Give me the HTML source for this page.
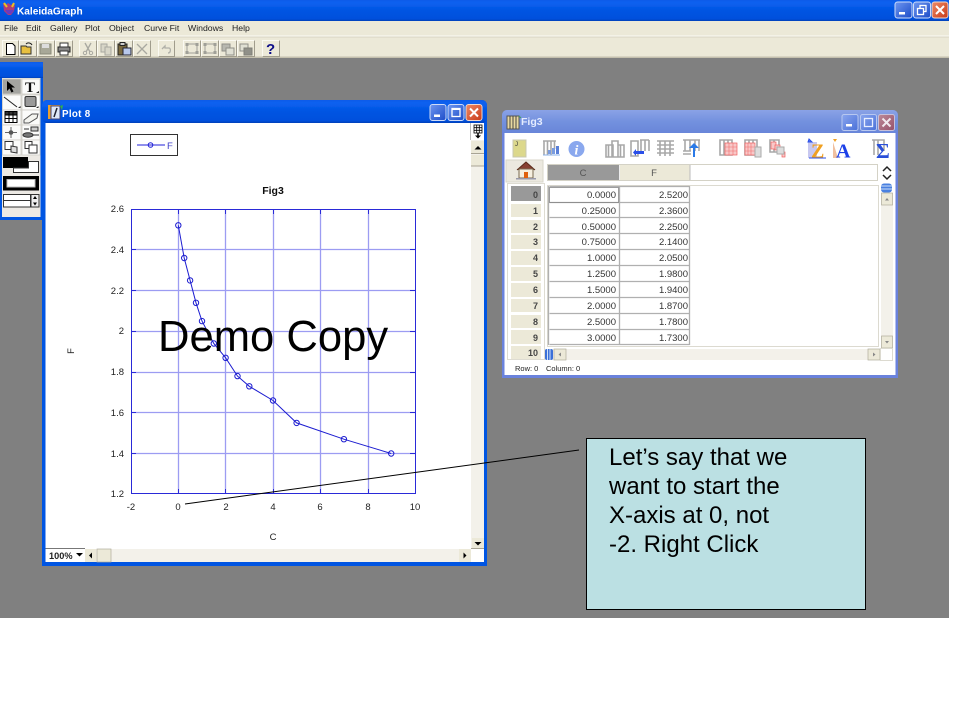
<!DOCTYPE html>
<html><head><meta charset="utf-8"><title>KaleidaGraph</title>
<style>
html,body{margin:0;padding:0;background:#fff;width:960px;height:720px;overflow:hidden}
svg{display:block;position:absolute;left:0;top:0}
text{font-family:"Liberation Sans",sans-serif}
.m{font-size:8.7px;fill:#222}
.d{font-size:9.5px;fill:#333;text-anchor:end}
.r{font-size:9px;font-weight:bold;fill:#444;text-anchor:end}
.c{font-size:24px;fill:#000}
</style></head><body>
<svg width="960" height="720" viewBox="0 0 960 720" xmlns="http://www.w3.org/2000/svg">
<defs>
<filter id="s" filterUnits="userSpaceOnUse" x="0" y="0" width="960" height="720"><feGaussianBlur stdDeviation=".32"/></filter>
<linearGradient id="tb" x1="0" y1="0" x2="0" y2="1"><stop offset="0" stop-color="#0a5ae8"/><stop offset=".12" stop-color="#0a62f0"/><stop offset=".5" stop-color="#0354e2"/><stop offset=".9" stop-color="#0250dc"/><stop offset="1" stop-color="#0140b8"/></linearGradient>
<linearGradient id="tl" x1="0" y1="0" x2="0" y2="1"><stop offset="0" stop-color="#8aa2e6"/><stop offset=".5" stop-color="#7290de"/><stop offset="1" stop-color="#6884d8"/></linearGradient>
<linearGradient id="bb" x1="0" y1="0" x2="1" y2="1"><stop offset="0" stop-color="#6e96f0"/><stop offset="1" stop-color="#1c4cc8"/></linearGradient>
<linearGradient id="br" x1="0" y1="0" x2="1" y2="1"><stop offset="0" stop-color="#ee8a66"/><stop offset="1" stop-color="#c83a18"/></linearGradient>
<linearGradient id="bl" x1="0" y1="0" x2="1" y2="1"><stop offset="0" stop-color="#8aa6ee"/><stop offset="1" stop-color="#4a70d8"/></linearGradient>
<linearGradient id="rl" x1="0" y1="0" x2="1" y2="1"><stop offset="0" stop-color="#bc8a98"/><stop offset="1" stop-color="#96506a"/></linearGradient>
</defs>
<rect width="960" height="720" fill="#fff"/>
<rect x="0" y="58" width="949" height="560" fill="#808080"/>

<g filter="url(#s)">
<!-- main title bar -->
<rect x="0" y="0" width="949" height="21" fill="url(#tb)"/>
<g>
<path d="M3 3l3 2 2-2 3 2 2-2 2 3-1 5-3 4H8L4 11z" fill="#b03a78"/>
<path d="M4 3l3 4M14 3l-2 4" stroke="#e8c020" stroke-width="2"/>
<path d="M5 10h9l-3 4H8z" fill="#6a3ac0"/>
</g>
<text x="17" y="14.500" style="font-size:10.100px;font-weight:bold;fill:#fff">KaleidaGraph</text>
<g>
<rect x="895" y="2" width="17" height="16" rx="2.5" fill="url(#bb)" stroke="#cfdcf8"/>
<rect x="899" y="12" width="6" height="2.5" fill="#fff"/>
<rect x="913.500" y="2" width="17" height="16" rx="2.5" fill="url(#bb)" stroke="#cfdcf8"/>
<rect x="920" y="5.500" width="6" height="6" fill="none" stroke="#fff" stroke-width="1.300"/>
<rect x="917.500" y="8.500" width="6" height="6" fill="#3a68d8" stroke="#fff" stroke-width="1.300"/>
<rect x="932" y="2" width="16" height="16" rx="2.5" fill="url(#br)" stroke="#f0d8cc"/>
<path d="M936 6l8 8M944 6l-8 8" stroke="#fff" stroke-width="2"/>
</g>

<!-- menu -->
<rect x="0" y="21" width="949" height="37" fill="#ece9d8"/>
<rect x="0" y="35.500" width="949" height="1" fill="#fdfcf6"/>
<rect x="0" y="36.500" width="949" height="1" fill="#d8d4c2"/>
<rect x="0" y="56.500" width="949" height="1.500" fill="#c4c0ae"/>
<text class="m" x="4" y="31">File</text>
<text class="m" x="26" y="31">Edit</text>
<text class="m" x="50" y="31">Gallery</text>
<text class="m" x="85" y="31">Plot</text>
<text class="m" x="109" y="31">Object</text>
<text class="m" x="144" y="31">Curve Fit</text>
<text class="m" x="188" y="31">Windows</text>
<text class="m" x="232" y="31">Help</text>

<!-- toolbar buttons -->
<g fill="#ece9d8" stroke="#fbfaf2" stroke-width="1">
<rect x="2.500" y="40.500" width="16" height="16"/><rect x="19.500" y="40.500" width="17" height="16"/><rect x="37.500" y="40.500" width="17" height="16"/><rect x="55.500" y="40.500" width="17" height="16"/>
<rect x="79.500" y="40.500" width="17" height="16"/><rect x="97.500" y="40.500" width="17" height="16"/><rect x="115.500" y="40.500" width="17" height="16"/><rect x="133.500" y="40.500" width="17" height="16"/>
<rect x="158.500" y="40.500" width="16" height="16"/>
<rect x="183.500" y="40.500" width="17" height="16"/><rect x="201.500" y="40.500" width="17" height="16"/><rect x="219.500" y="40.500" width="17" height="16"/><rect x="237.500" y="40.500" width="17" height="16"/>
<rect x="262.500" y="40.500" width="17" height="16"/>
</g>
<path fill="none" stroke="#a09c8c" d="M18.500 40.500v16h-16M36.500 40.500v16h-17M54.500 40.500v16h-17M72.500 40.500v16h-17M96.500 40.500v16h-17M114.500 40.500v16h-17M132.500 40.500v16h-17M150.500 40.500v16h-17M174.500 40.500v16h-16M200.500 40.500v16h-17M218.500 40.500v16h-17M236.500 40.500v16h-17M254.500 40.500v16h-17M279.500 40.500v16h-17"/>
<path d="M6.500 43.500h6l2.500 2.500v8.500h-8.500z" fill="#fff" stroke="#000"/>
<path d="M21 46h5l1 1h4v7H21z" fill="#e8c040" stroke="#333"/><path d="M26 44c2-2 5-1 6 1" fill="none" stroke="#222"/>
<rect x="40" y="44" width="11" height="10" fill="#a8a898" stroke="#8a8a7a"/><rect x="42" y="44" width="7" height="4" fill="#ddd"/>
<rect x="58" y="47" width="12" height="5" fill="#888" stroke="#222"/><rect x="60" y="43" width="8" height="4" fill="#fff" stroke="#333"/><rect x="60" y="51" width="8" height="4" fill="#fff" stroke="#333"/>
<path d="M85 43l5 9M91 43l-5 9" stroke="#a8a8a0" stroke-width="1.300"/><circle cx="85" cy="53" r="1.700" fill="none" stroke="#a8a8a0"/><circle cx="91" cy="53" r="1.700" fill="none" stroke="#a8a8a0"/>
<rect x="101" y="44" width="6" height="8" fill="#d8d6c8" stroke="#a8a8a0"/><rect x="105" y="47" width="6" height="8" fill="#d8d6c8" stroke="#a8a8a0"/>
<rect x="118" y="44" width="9" height="11" fill="#7a6a40" stroke="#222"/><rect x="120" y="42.500" width="5" height="3" fill="#ccc" stroke="#222"/><rect x="123" y="48" width="8" height="7" fill="#b8c8ec" stroke="#223"/>
<path d="M137 44l10 10M147 44l-10 10" stroke="#a8a8a0" stroke-width="1.300"/>
<path d="M162 49l3-3v2h4c2 0 2 5 -1 5" fill="none" stroke="#b0b0a8" stroke-width="1.300"/>
<g fill="none" stroke="#a0a098"><rect x="187" y="44" width="10" height="9"/><rect x="205" y="44" width="10" height="9"/></g>
<g fill="#a0a098"><rect x="185.500" y="43" width="3" height="3"/><rect x="195.500" y="43" width="3" height="3"/><rect x="185.500" y="51" width="3" height="3"/><rect x="195.500" y="51" width="3" height="3"/><rect x="203.500" y="43" width="3" height="3"/><rect x="213.500" y="43" width="3" height="3"/><rect x="203.500" y="51" width="3" height="3"/><rect x="213.500" y="51" width="3" height="3"/></g>
<rect x="222" y="44" width="8" height="7" fill="#b8b8b0" stroke="#909088"/><rect x="226" y="48" width="8" height="7" fill="#e0e0d4" stroke="#909088"/>
<rect x="240" y="44" width="8" height="7" fill="#e0e0d4" stroke="#909088"/><rect x="244" y="48" width="8" height="7" fill="#909088" stroke="#808078"/>
<text x="266" y="54" style="font-size:15px;font-weight:bold;fill:#101088">?</text>

<!-- tool palette -->
<rect x="0" y="62" width="43" height="158" fill="#0354e2"/>
<rect x="0" y="62" width="43" height="16" fill="url(#tb)"/>
<rect x="2" y="78" width="38.500" height="139" fill="#ece9e4"/>
<g fill="#fbfbfa" stroke="#cfcdc6" stroke-width=".8">
<rect x="2.500" y="79" width="18.500" height="15" fill="#a4a4a0"/><rect x="22" y="79" width="18" height="15"/>
<rect x="2.500" y="95" width="18.500" height="15"/><rect x="22" y="95" width="18" height="15"/>
<rect x="2.500" y="110" width="18.500" height="15"/><rect x="22" y="110" width="18" height="15"/>
<rect x="2.500" y="125" width="18.500" height="15"/><rect x="22" y="125" width="18" height="15"/>
<rect x="2.500" y="140" width="18.500" height="15"/><rect x="22" y="140" width="18" height="15"/>
</g>
<path d="M7 81l0 10 2.500-2.500 2 4 2-1-2-4h3.500z" fill="#000"/>
<text x="25" y="92" style="font-family:'Liberation Serif',serif;font-size:15px;font-weight:bold;fill:#111">T</text>
<path d="M4 97l13 10" stroke="#222"/><rect x="25" y="96.500" width="11" height="10" rx="1.500" fill="#9a9a9a" stroke="#333"/>
<path d="M36 93h3v-2zM18 108h2.500v-2zM36 108h2.500v-2z" fill="#222"/>
<g stroke="#000" stroke-width="1"><rect x="5" y="111.500" width="12" height="11" fill="#fff"/><rect x="5" y="111.500" width="12" height="3.500" fill="#333"/><path d="M9 112v10M13 112v10M5 118.500h12"/></g>
<path d="M24 120l8-6h6l-1 4-8 5h-5z" fill="#f4f4f0" stroke="#555"/>
<path d="M5 132.500h12M11 127v11" stroke="#666"/><circle cx="11" cy="132.500" r="2.300" fill="#555"/>
<rect x="31" y="127" width="7" height="4" fill="#ccc" stroke="#333"/><ellipse cx="28" cy="135" rx="5" ry="2.200" fill="#777" stroke="#333"/><path d="M24 129h5M33 135h6" stroke="#333"/>
<rect x="5" y="141.500" width="8" height="8" fill="#fff" stroke="#333"/><path d="M11 146l6 1v6l-6-1z" fill="#ddd" stroke="#333"/><rect x="25" y="141.500" width="7" height="7" fill="#fff" stroke="#333"/><rect x="29" y="145" width="8" height="8" fill="#fff" stroke="#333"/>
<rect x="3" y="157" width="25" height="11" fill="#000"/>
<path d="M28.500 161.500h10v11h-25v-4.500H28.500z" fill="#fff" stroke="#333"/>
<rect x="3" y="176" width="36" height="14.500" fill="#000"/><rect x="7" y="179.500" width="28" height="7.500" fill="#fff" stroke="#bbb"/>
<rect x="3.500" y="194.500" width="27" height="12.500" fill="#fff" stroke="#333"/><path d="M3.500 200.500h27" stroke="#333"/>
<rect x="31" y="194.500" width="8" height="12.500" fill="#eee" stroke="#333"/><path d="M33 199l2-3 2 3zM33 202.500l2 3 2-3z" fill="#000"/>

<!-- plot window -->
<path d="M42 566V106q0-6 6-6h433q6 0 6 6v460z" fill="#0354e2"/>
<rect x="42" y="100" width="445" height="23" rx="5" fill="url(#tb)"/>
<rect x="45.500" y="123" width="438.500" height="439" fill="#fff"/>
<g>
<rect x="48" y="105" width="12" height="14" fill="#e8a030"/><rect x="51" y="106" width="9" height="13" fill="#dfe8f8" stroke="#447"/><path d="M57 108l-3 9" stroke="#223" stroke-width="1.500"/><path d="M60 106l3-1-1 5z" fill="#30b050"/>
</g>
<text x="62" y="117" style="font-size:9.800px;font-weight:bold;fill:#fff;letter-spacing:.3px">Plot 8</text>
<rect x="430" y="104.500" width="16" height="16" rx="2.500" fill="url(#bb)" stroke="#cfdcf8"/><rect x="434" y="114.500" width="6" height="2.500" fill="#fff"/>
<rect x="448" y="104.500" width="16" height="16" rx="2.500" fill="url(#bb)" stroke="#cfdcf8"/><rect x="452" y="108.500" width="8" height="8" fill="none" stroke="#fff" stroke-width="1.300"/><path d="M452 109h8" stroke="#fff" stroke-width="2"/>
<rect x="466" y="104.500" width="16" height="16" rx="2.500" fill="url(#br)" stroke="#f0d8cc"/><path d="M470 108.500l8 8M478 108.500l-8 8" stroke="#fff" stroke-width="2"/>

<!-- plot scrollbars -->
<rect x="471" y="123" width="13" height="426" fill="#f3f1ea"/>
<rect x="470.500" y="123" width="1" height="17" fill="#777"/>
<rect x="471" y="123" width="13" height="17" fill="#fff"/>
<g stroke="#000" stroke-width=".8" fill="#fff"><rect x="474" y="125" width="8" height="8"/><path d="M474 127.700h8M474 130.300h8M476.700 125v8M479.300 125v8" fill="none"/></g>
<path d="M478 133v3" stroke="#000" stroke-width="1.500"/><path d="M475 135.500h6l-3 3z" fill="#000"/>
<rect x="471" y="141" width="13" height="12" fill="#ece9d8"/><rect x="471" y="153" width="13" height="1" fill="#a8a494"/><path d="M474.500 149.500h7l-3.500-3.500z" fill="#000"/>
<rect x="471" y="155" width="13" height="11" fill="#ece9d8"/><rect x="471" y="165.500" width="13" height="1" fill="#a8a494"/>
<rect x="472" y="538" width="12" height="11" fill="#ece9d8"/><rect x="471" y="548" width="13" height="1" fill="#a8a494"/><path d="M474.500 542h7l-3.500 3.500z" fill="#000"/>
<rect x="45.500" y="549" width="425.500" height="13" fill="#f3f1ea"/>
<rect x="45.500" y="548" width="39.500" height="1" fill="#777"/>
<rect x="45.500" y="549" width="39.500" height="13" fill="#fff"/>
<text x="49" y="559" style="font-size:9.200px;font-weight:bold;fill:#222">100%</text>
<path d="M76 553h7l-3.500 3.500z" fill="#000"/>
<rect x="85" y="549" width="11" height="13" fill="#ece9d8"/><path d="M92 552.500v6l-3-3z" fill="#000"/>
<rect x="97" y="549" width="14" height="13" fill="#ece9d8" stroke="#b0ac9c" stroke-width=".7"/>
<rect x="459" y="549" width="12" height="13" fill="#ece9d8"/><path d="M463.500 552.500v6l3-3z" fill="#000"/>
<rect x="471" y="550" width="13" height="12" fill="#fff"/>

<!-- legend -->
<rect x="130.500" y="134.500" width="47" height="21" fill="#fff" stroke="#333"/>
<path d="M137 145h28" stroke="#2020d8"/><circle cx="150.500" cy="145" r="2.300" fill="none" stroke="#2020d8"/>
<text x="167" y="149" style="font-size:9.500px;fill:#4040c8">F</text>

<!-- chart -->
<text x="273" y="194" text-anchor="middle" style="font-size:10.500px;font-weight:bold;fill:#111">Fig3</text>
<g stroke="#9c9cf2" stroke-width="1.300">
<path d="M178.500 209v285M225.500 209v285M273.500 209v285M320.500 209v285M368.500 209v285"/>
<path d="M131 249.500h284M131 290.500h284M131 331.500h284M131 372.500h284M131 412.500h284M131 453.500h284"/>
</g>
<rect x="131.500" y="209.500" width="284" height="284" fill="none" stroke="#2a2ad8"/>
<path d="M178.500 209v5M225.500 209v5M273.500 209v5M320.500 209v5M368.500 209v5M178.500 494v-5M225.500 494v-5M273.500 494v-5M320.500 494v-5M368.500 494v-5M131 249.500h5M131 290.500h5M131 331.500h5M131 372.500h5M131 412.500h5M131 453.500h5M415 249.500h-5M415 290.500h-5M415 331.500h-5M415 372.500h-5M415 412.500h-5M415 453.500h-5" stroke="#2a2ad8"/>
<g style="font-size:9.500px;fill:#222" text-anchor="end">
<text x="124" y="212">2.6</text><text x="124" y="253">2.4</text><text x="124" y="294">2.2</text><text x="124" y="334">2</text><text x="124" y="375">1.8</text><text x="124" y="416">1.6</text><text x="124" y="457">1.4</text><text x="124" y="497">1.2</text>
</g>
<g style="font-size:9.500px;fill:#222" text-anchor="middle">
<text x="131" y="510">-2</text><text x="178" y="510">0</text><text x="226" y="510">2</text><text x="273" y="510">4</text><text x="320" y="510">6</text><text x="368" y="510">8</text><text x="415" y="510">10</text>
<text x="273" y="540">C</text>
<text transform="translate(74 351) rotate(-90)">F</text>
</g>
<path d="M178.300 225.300L184.200 258L190.100 280.400L196 302.800L202 321.100L213.800 343.500L225.600 357.800L237.500 376.100L249.300 386.300L273 400.500L296.600 422.900L343.900 439.200L391.200 453.500" fill="none" stroke="#1c1cd0"/>
<g fill="none" stroke="#1c1cd0">
<circle cx="178.300" cy="225.300" r="2.700"/><circle cx="184.200" cy="258" r="2.700"/><circle cx="190.100" cy="280.400" r="2.700"/><circle cx="196" cy="302.800" r="2.700"/><circle cx="202" cy="321.100" r="2.700"/><circle cx="213.800" cy="343.500" r="2.700"/><circle cx="225.600" cy="357.800" r="2.700"/><circle cx="237.500" cy="376.100" r="2.700"/><circle cx="249.300" cy="386.300" r="2.700"/><circle cx="273" cy="400.500" r="2.700"/><circle cx="296.600" cy="422.900" r="2.700"/><circle cx="343.900" cy="439.200" r="2.700"/><circle cx="391.200" cy="453.500" r="2.700"/>
</g>
<text x="158" y="351" style="font-size:43.600px;fill:#000">Demo Copy</text>

<!-- Fig3 window -->
<path d="M502 378V116q0-6 6-6h384q6 0 6 6v262z" fill="#6a82dc"/>
<rect x="502" y="110" width="396" height="24" rx="5" fill="url(#tl)"/>
<rect x="504.500" y="133" width="391" height="242" fill="#fff"/>
<g>
<rect x="507" y="116" width="12" height="13" fill="#e8d8a0" stroke="#555"/><path d="M510 116v13M513 116v13M516 116v13" stroke="#444"/><path d="M519 116l2 2" stroke="#40a060"/>
</g>
<text x="521" y="125" style="font-size:10.500px;font-weight:bold;fill:#e4ecff">Fig3</text>
<rect x="842" y="114.500" width="16" height="16" rx="2" fill="url(#bl)" stroke="#b8c8f0"/><rect x="846" y="124" width="6" height="2.500" fill="#fff"/>
<rect x="860.500" y="114.500" width="16" height="16" rx="2" fill="url(#bl)" stroke="#b8c8f0"/><rect x="864.500" y="118.500" width="8" height="8" fill="none" stroke="#e8eeff" stroke-width="1.300"/>
<rect x="878.500" y="114.500" width="16" height="16" rx="2" fill="url(#rl)" stroke="#c8c0d8"/><path d="M882.500 118.500l8 8M890.500 118.500l-8 8" stroke="#f0e8ee" stroke-width="2"/>

<!-- Fig3 toolbar icons -->
<rect x="513" y="140" width="13" height="17" fill="#dcd88c" stroke="#c8c8b0"/><text x="515" y="146" style="font-size:6px;fill:#333">J</text>
<g fill="none" stroke="#a8a8a8" stroke-width="1.600">
<path d="M543 141h13M544 141v14M547.500 141v14M551 141v14M554.500 141v8"/>
<path d="M606 145v12h7v-12zM612 141v16h6v-16zM618 145v12h6v-12zM608.500 145v12M620.500 145v12"/>
<path d="M631 141v15h7v-15zM641 140v11M645 140v11M649 140v11M640 140h9"/>
<path d="M657 141h17M657 145h17M657 149h17M657 153h17M660 141v15M665 141v15M670 141v15"/>
<path d="M683 140h17M685 140v11M690 140v11M695 140v11M699 140v11M683 151h8M683 154h8"/>
<path d="M720 140h12v15h-12zM724 140v15M728 140v15M745 140h12v15h-12zM749 140v15M753 140v15M770 140h9v12h-9zM774 140v12"/>
<path d="M872 140h12v11M874 140v15M878 140v15"/>
</g>
<rect x="548" y="150" width="3" height="4" fill="#7a9ce0"/><rect x="552" y="148" width="3" height="6" fill="#7a9ce0"/><rect x="556" y="146" width="3" height="8" fill="#5a80d8"/><path d="M543 155h17" stroke="#8ab0e8"/>
<circle cx="576.500" cy="149" r="8" fill="#8aa8ee"/><text x="576.500" y="154.500" text-anchor="middle" style="font-family:'Liberation Serif',serif;font-size:14px;font-weight:bold;font-style:italic;fill:#fff">i</text>
<path d="M644 146v5h-3l-5 0v-2l-3 3.500 3 3.500v-2h8v-8z" fill="#2a50e8"/>
<path d="M695 157v-9h4l-5-5-5 5h4v9z" fill="#2a7ae8"/>
<g fill="#f8c8c8" stroke="#f06060" stroke-width=".7"><rect x="725" y="143" width="12" height="12"/><rect x="745" y="143" width="10" height="12"/><rect x="771" y="142" width="5" height="7"/><rect x="775" y="145" width="5" height="5"/><rect x="782" y="152" width="3" height="5"/></g>
<path d="M729 143v12M733 143v12M725 147h12M725 151h12M748 143v12M751 143v12M745 147h10M745 151h10" stroke="#f07070" stroke-width=".6"/>
<rect x="755" y="147" width="6" height="10" fill="#ddd" stroke="#aaa"/><rect x="777" y="147" width="7" height="7" fill="#ddd" stroke="#aaa"/>
<path d="M808 142h9v16h-9z" fill="#c8c8f0"/><text x="811" y="157.500" style="font-family:'Liberation Serif',serif;font-size:20px;font-weight:bold;fill:#f0a020">Z</text><path d="M809 139l3 3h-4zM809 158h17" stroke="#2a50e8" fill="#5070f0"/>
<path d="M833 142l5 16h-5z" fill="#f0c0a0"/><text x="836" y="157.500" style="font-family:'Liberation Serif',serif;font-size:20px;font-weight:bold;fill:#1a40e8">A</text><path d="M833 139l4 0-2 3z" fill="#f0a020"/>
<text x="876" y="158" style="font-family:'Liberation Serif',serif;font-size:21px;font-weight:bold;fill:#2a50d8">Σ</text>

<!-- Fig3 table -->
<rect x="506" y="160" width="37" height="22" fill="#ece9e0" stroke="#d8d6ca"/>
<path d="M517 170l9-8 9 8" fill="#884030" stroke="#5a2a1a"/><rect x="519" y="169" width="14" height="9" fill="#f6efe0" stroke="#7a6a50"/><rect x="524" y="172" width="4" height="6" fill="#e06010"/><rect x="516" y="178" width="20" height="1.500" fill="#99a"/>
<rect x="547.500" y="164.500" width="330" height="16" fill="#fff" stroke="#d4d2c6"/>
<rect x="548" y="165" width="71" height="15" fill="#999"/><rect x="620" y="165" width="70" height="15" fill="#ece9d8"/>
<rect x="619" y="165" width="1" height="15" fill="#eee"/><rect x="689.500" y="165" width="1" height="15" fill="#bbb"/>
<text x="583" y="176" text-anchor="middle" style="font-size:9.500px;fill:#555">C</text>
<text x="654" y="176" text-anchor="middle" style="font-size:9.500px;fill:#555">F</text>

<rect x="507.500" y="183.500" width="37" height="176" fill="#fff" stroke="#dedcd2"/>
<rect x="547.500" y="185.500" width="331" height="161" fill="#fff" stroke="#dcdad0"/>
<g fill="#ece9d8">
<rect x="511" y="186" width="30" height="15" fill="#999"/>
<rect x="511" y="204" width="30" height="13"/><rect x="511" y="220" width="30" height="13"/><rect x="511" y="235" width="30" height="14"/><rect x="511" y="251" width="30" height="14"/><rect x="511" y="267" width="30" height="14"/><rect x="511" y="283" width="30" height="14"/><rect x="511" y="299" width="30" height="13"/><rect x="511" y="315" width="30" height="13"/><rect x="511" y="330" width="30" height="14"/><rect x="511" y="346" width="30" height="13"/>
</g>
<g stroke="#b0b0b0" stroke-width="1.300" fill="none">
<path d="M549.500 186.500h140M549.500 202.500h140M549.500 217.500h140M549.500 233.500h140M549.500 249.500h140M549.500 265.500h140M549.500 281.500h140M549.500 297.500h140M549.500 313.500h140M549.500 329.500h140M549.500 344.500h140"/>
<path d="M619.500 186v159M689.500 186v159M548.500 186v159"/>
</g>
<rect x="549.500" y="187.500" width="69" height="15" fill="none" stroke="#888" stroke-width=".8"/>
<g>
<text class="r" x="538" y="198">0</text><text class="r" x="538" y="214">1</text><text class="r" x="538" y="230">2</text><text class="r" x="538" y="245">3</text><text class="r" x="538" y="261">4</text><text class="r" x="538" y="277">5</text><text class="r" x="538" y="293">6</text><text class="r" x="538" y="309">7</text><text class="r" x="538" y="325">8</text><text class="r" x="538" y="341">9</text><text class="r" x="538" y="356">10</text>
</g>
<text class="d" x="616" y="198">0.0000</text><text class="d" x="688" y="198">2.5200</text>
<text class="d" x="616" y="214">0.25000</text><text class="d" x="688" y="214">2.3600</text>
<text class="d" x="616" y="230">0.50000</text><text class="d" x="688" y="230">2.2500</text>
<text class="d" x="616" y="245">0.75000</text><text class="d" x="688" y="245">2.1400</text>
<text class="d" x="616" y="261">1.0000</text><text class="d" x="688" y="261">2.0500</text>
<text class="d" x="616" y="277">1.2500</text><text class="d" x="688" y="277">1.9800</text>
<text class="d" x="616" y="293">1.5000</text><text class="d" x="688" y="293">1.9400</text>
<text class="d" x="616" y="309">2.0000</text><text class="d" x="688" y="309">1.8700</text>
<text class="d" x="616" y="325">2.5000</text><text class="d" x="688" y="325">1.7800</text>
<text class="d" x="616" y="341">3.0000</text><text class="d" x="688" y="341">1.7300</text>

<!-- Fig3 scrollbars -->
<path d="M883 171l4-4 4 4M883 175l4 4 4-4" fill="none" stroke="#222" stroke-width="1.500"/>
<rect x="881" y="183.500" width="11" height="9" rx="3" fill="#4a80e0"/><path d="M881 186h11M881 189h11" stroke="#cfe0f8"/>
<rect x="881" y="193" width="12" height="155" fill="#f3f1ea"/>
<rect x="881.500" y="193" width="11" height="12" fill="#ece9d8" stroke="#b0ac9c" stroke-width=".7"/><path d="M885 200.500h4l-2-2.500z" fill="#888"/>
<rect x="881.500" y="336" width="11" height="12" fill="#ece9d8" stroke="#b0ac9c" stroke-width=".7"/><path d="M885 341h4l-2 2.500z" fill="#888"/>
<rect x="545" y="349" width="335" height="11" fill="#f3f1ea"/>
<rect x="545" y="349" width="8" height="11" rx="2" fill="#3a70d8"/><path d="M547.500 349v11M550 349v11" stroke="#cfe0f8"/>
<rect x="554" y="349" width="12" height="11" fill="#ece9d8" stroke="#b0ac9c" stroke-width=".7"/><path d="M561 352.500v4l-2.500-2z" fill="#888"/>
<rect x="868" y="349" width="12" height="11" fill="#ece9d8" stroke="#b0ac9c" stroke-width=".7"/><path d="M873 352.500v4l2.500-2z" fill="#888"/>
<rect x="880.500" y="348.500" width="12" height="12" fill="#fff" stroke="#dcdad0"/>
<text x="515" y="371" style="font-size:7.500px;fill:#222">Row: 0</text>
<text x="546" y="371" style="font-size:7.500px;fill:#222">Column: 0</text>
</g>

<!-- callout -->
<path d="M185 504L579 450" stroke="#000" fill="none"/>
<rect x="586.500" y="438.500" width="279" height="171" fill="#bbe0e3" stroke="#000"/>
<text class="c" x="609" y="465">Let’s say that we</text>
<text class="c" x="609" y="494">want to start the</text>
<text class="c" x="609" y="523">X-axis at 0, not</text>
<text class="c" x="609" y="552">-2. Right Click</text>
</svg>
</body></html>
